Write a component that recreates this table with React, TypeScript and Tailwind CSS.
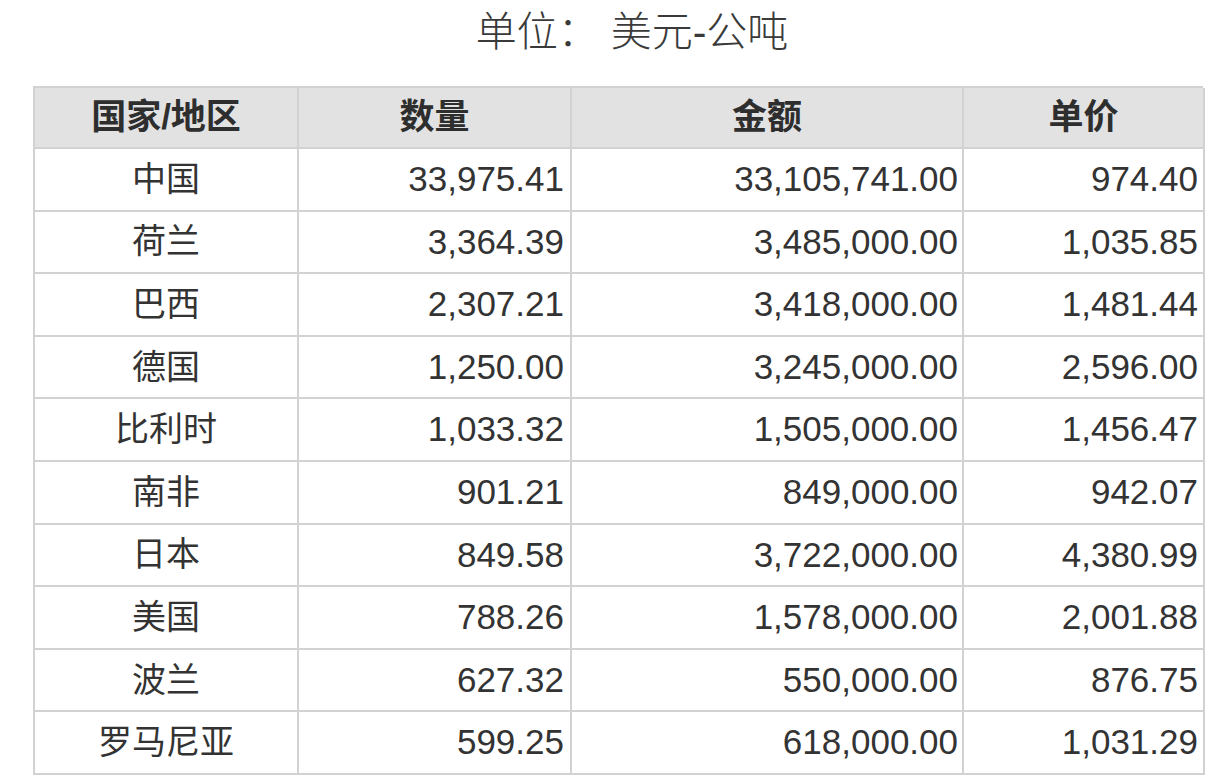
const rows = [
  { name: "中国", qty: "33,975.41", amount: "33,105,741.00", price: "974.40" },
  { name: "荷兰", qty: "3,364.39", amount: "3,485,000.00", price: "1,035.85" },
  { name: "巴西", qty: "2,307.21", amount: "3,418,000.00", price: "1,481.44" },
  { name: "德国", qty: "1,250.00", amount: "3,245,000.00", price: "2,596.00" },
  { name: "比利时", qty: "1,033.32", amount: "1,505,000.00", price: "1,456.47" },
  { name: "南非", qty: "901.21", amount: "849,000.00", price: "942.07" },
  { name: "日本", qty: "849.58", amount: "3,722,000.00", price: "4,380.99" },
  { name: "美国", qty: "788.26", amount: "1,578,000.00", price: "2,001.88" },
  { name: "波兰", qty: "627.32", amount: "550,000.00", price: "876.75" },
  { name: "罗马尼亚", qty: "599.25", amount: "618,000.00", price: "1,031.29" },
];

const headers = ["国家/地区", "数量", "金额", "单价"];

const App = () => {
  return (
    <div className="w-[1222px] h-[780px] bg-white text-[#333333] overflow-hidden font-['Liberation_Sans','Noto_Sans_CJK_SC',sans-serif]">
      {/* Title */}
      <div className="flex justify-center items-center gap-[12px] h-[66px] pl-[42px] pb-[2px] text-[41px] leading-none font-light text-[#3a3a3a]">
        <span>单位：</span>
        <span>美元-公吨</span>
      </div>

      {/* Table */}
      <div className="ml-[33px] mt-[20px] w-[1170px] grid grid-cols-[264px_273px_392px_241px] border-t-2 border-l-2 border-[#d2d2d2]">
        {headers.map((h) => (
          <div
            key={h}
            className="h-[61px] flex items-center justify-center bg-[#e2e2e2] border-r-2 border-b-2 border-[#d2d2d2] text-[35px] font-bold text-[#2e2e2e]"
          >
            {h}
          </div>
        ))}

        {rows.map((r) => (
          <div key={r.name} className="contents">
            <div className="h-[62.6px] flex items-center justify-center border-r-2 border-b-2 border-[#d2d2d2] text-[34px]">
              {r.name}
            </div>
            <div className="h-[62.6px] flex items-center justify-end pr-[6px] border-r-2 border-b-2 border-[#d2d2d2] text-[35px]">
              {r.qty}
            </div>
            <div className="h-[62.6px] flex items-center justify-end pr-[4px] border-r-2 border-b-2 border-[#d2d2d2] text-[35px]">
              {r.amount}
            </div>
            <div className="h-[62.6px] flex items-center justify-end pr-[5px] border-r-2 border-b-2 border-[#d2d2d2] text-[35px]">
              {r.price}
            </div>
          </div>
        ))}
      </div>
    </div>
  );
};

export default App;
